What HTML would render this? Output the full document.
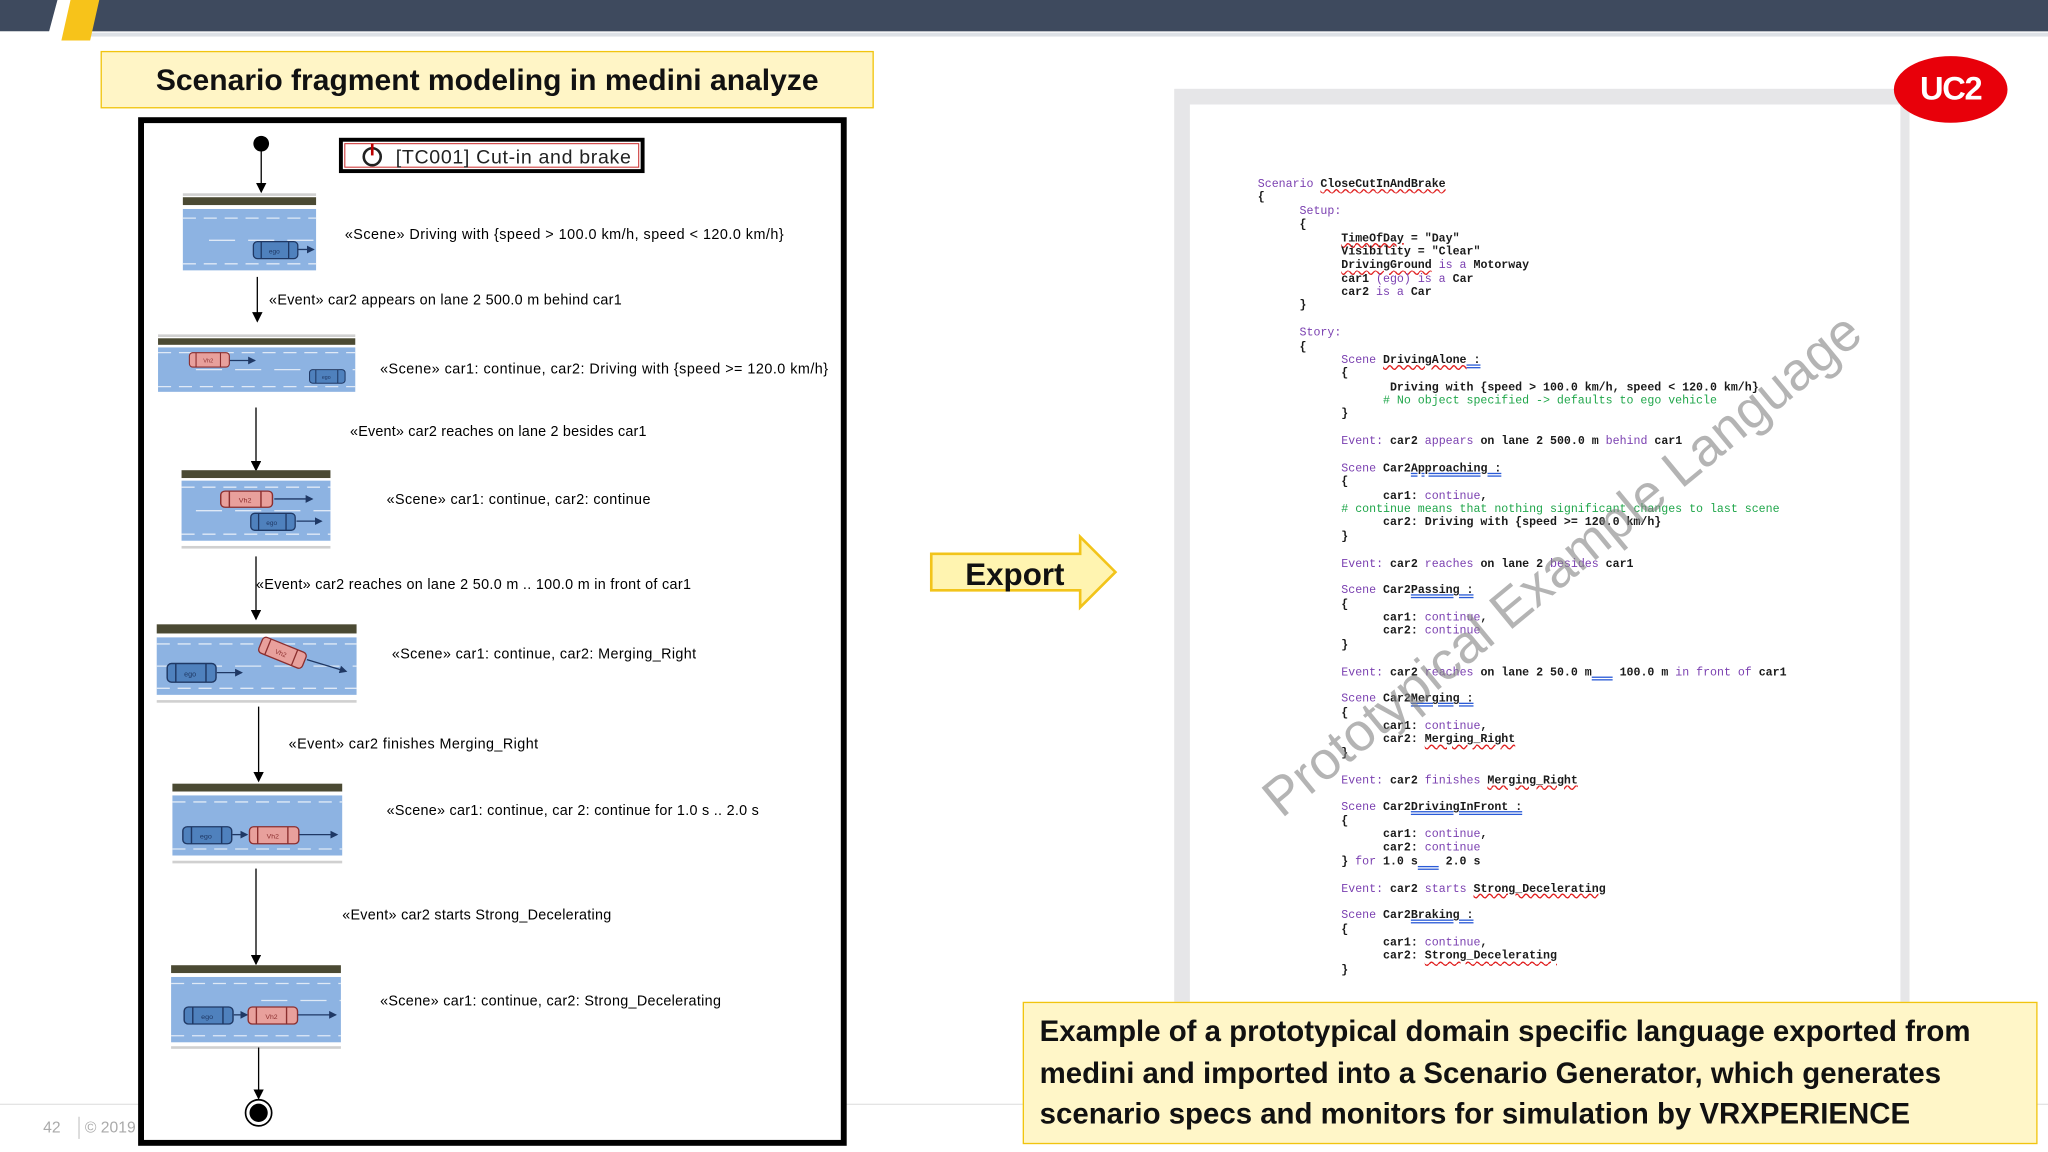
<!DOCTYPE html>
<html><head><meta charset="utf-8">
<style>
html,body{margin:0;padding:0;background:#fff;overflow:hidden;width:2048px;height:1152px}
#s{position:absolute;left:0;top:0;width:1568px;height:882px;transform:scale(1.306122);transform-origin:0 0;font-family:"Liberation Sans",sans-serif}
.abs{position:absolute}
pre{margin:0;font-family:"Liberation Mono",monospace;font-size:8.9px;line-height:10.38px;color:#1a1a1a;font-weight:bold;letter-spacing:0}
.k{color:#7a3fb0;font-weight:normal}
.g{color:#1fa64a;font-weight:normal}
.r{text-decoration:underline wavy #e02020;text-decoration-thickness:1px}
.b{text-decoration:underline double #2a5bd7}
</style></head><body>
<div id="s">
<!-- top bar -->
<svg class="abs" style="left:0;top:0" width="1568" height="40">
<rect x="0" y="0" width="1568" height="24" fill="#3e4a5e"/>
<rect x="0" y="25" width="1568" height="3" fill="#dde1e6"/>
<polygon points="44,0 58,0 50,30 36,30" fill="#fff"/>
<polygon points="0,24 48,24 46,30 0,30" fill="#fff"/>
<polygon points="54,0 76,0 69,31 47,31" fill="#f7c31a"/>
</svg>
<!-- title -->
<div class="abs" style="left:77px;top:39px;width:590px;height:42px;background:#fff5c6;border:1px solid #f1c40f;text-align:center;font-weight:bold;font-size:23px;line-height:42px;color:#111">Scenario fragment modeling in medini analyze</div>

<!-- footer -->
<div class="abs" style="left:0;top:845px;width:1568px;height:1px;background:#e3e3e3"></div>
<div class="abs" style="left:33px;top:856px;font-size:12px;color:#aaa">42</div>
<div class="abs" style="left:60px;top:855px;width:1px;height:17px;background:#ccc"></div>
<div class="abs" style="left:65px;top:856px;font-size:12px;color:#aaa">© 2019</div>

<!-- diagram -->
<svg class="abs" style="left:0;top:0" width="700" height="882" font-family="Liberation Sans, sans-serif" font-size="11">
<defs>
<marker id="ah" markerWidth="8" markerHeight="8" refX="7" refY="4" orient="auto" markerUnits="userSpaceOnUse"><path d="M0,0 L8,4 L0,8 z" fill="#000"/></marker>
<marker id="sa" markerWidth="6" markerHeight="6" refX="5" refY="3" orient="auto" markerUnits="userSpaceOnUse"><path d="M0,0 L6,3 L0,6 z" fill="#1f3864"/></marker>
<g id="ego"><rect x="0" y="0" width="34" height="13" rx="3" fill="#4f81bd" stroke="#1f3864" stroke-width="1"/><line x1="6" y1="0" x2="6" y2="13" stroke="#1f3864"/><line x1="27" y1="0" x2="27" y2="13" stroke="#1f3864"/><text x="16" y="9" font-size="5" text-anchor="middle" fill="#1f3864">ego</text></g>
<g id="vh"><rect x="0" y="0" width="36" height="13" rx="3" fill="#e8a09c" stroke="#8b2e2e" stroke-width="1"/><line x1="6" y1="0" x2="6" y2="13" stroke="#8b2e2e"/><line x1="28" y1="0" x2="28" y2="13" stroke="#8b2e2e"/><text x="17" y="9" font-size="5" text-anchor="middle" fill="#8b2e2e">Vh2</text></g>
</defs>
<rect x="108" y="92" width="538" height="783" fill="#fff" stroke="#000" stroke-width="4.5"/>
<circle cx="200" cy="110" r="6" fill="#000"/>
<line x1="200" y1="114" x2="200" y2="147" stroke="#000" marker-end="url(#ah)"/>
<rect x="261" y="107" width="231" height="24" fill="#fff" stroke="#000" stroke-width="3"/>
<rect x="264" y="110" width="225" height="18" fill="none" stroke="#c33" stroke-width="0.8"/>
<circle cx="285" cy="120" r="6.5" fill="none" stroke="#222" stroke-width="2"/>
<line x1="285" y1="110" x2="285" y2="119" stroke="#b00" stroke-width="2"/>
<text x="303" y="125" font-size="15" fill="#222" textLength="180">[TC001] Cut-in and brake</text>

<!-- scene1 -->
<rect x="140" y="148" width="102" height="2" fill="#d0d0d0"/>
<rect x="140" y="151" width="102" height="6" fill="#4b4a33"/>
<rect x="140" y="160" width="102" height="47" fill="#8db3e2"/>
<line x1="140" y1="167" x2="242" y2="167" stroke="#dfe9f6" stroke-dasharray="10,6"/>
<line x1="160" y1="184" x2="242" y2="184" stroke="#dfe9f6" stroke-dasharray="20,10"/>
<line x1="140" y1="202" x2="242" y2="202" stroke="#dfe9f6" stroke-dasharray="10,6"/>
<use href="#ego" x="194" y="185"/><line x1="228" y1="191" x2="240" y2="191" stroke="#1f3864" marker-end="url(#sa)"/>
<text x="264" y="183" textLength="336">«Scene» Driving with {speed &gt; 100.0 km/h, speed &lt; 120.0 km/h}</text>
<line x1="197" y1="212" x2="197" y2="246" stroke="#000" marker-end="url(#ah)"/>
<text x="206" y="233" textLength="270">«Event» car2 appears on lane 2 500.0 m behind car1</text>

<!-- scene2 -->
<rect x="121" y="256" width="151" height="2" fill="#d0d0d0"/>
<rect x="121" y="259" width="151" height="5" fill="#4b4a33"/>
<rect x="121" y="266" width="151" height="34" fill="#8db3e2"/>
<line x1="121" y1="270" x2="272" y2="270" stroke="#dfe9f6" stroke-dasharray="10,6"/>
<line x1="150" y1="283" x2="272" y2="283" stroke="#dfe9f6" stroke-dasharray="20,10"/>
<line x1="121" y1="296" x2="272" y2="296" stroke="#dfe9f6" stroke-dasharray="10,6"/>
<g transform="translate(145,270) scale(0.85)"><use href="#vh"/></g><line x1="176" y1="276" x2="195" y2="276" stroke="#1f3864" marker-end="url(#sa)"/>
<g transform="translate(237,283) scale(0.8)"><use href="#ego"/></g>
<text x="291" y="286" textLength="343">«Scene» car1: continue, car2: Driving with {speed &gt;= 120.0 km/h}</text>
<line x1="196" y1="312" x2="196" y2="360" stroke="#000" marker-end="url(#ah)"/>
<text x="268" y="334" textLength="227">«Event» car2 reaches on lane 2 besides car1</text>

<!-- scene3 -->
<rect x="139" y="360" width="114" height="6" fill="#4b4a33"/>
<rect x="139" y="368" width="114" height="46" fill="#8db3e2"/>
<line x1="139" y1="373" x2="253" y2="373" stroke="#dfe9f6" stroke-dasharray="10,6"/>
<line x1="150" y1="391" x2="253" y2="391" stroke="#dfe9f6" stroke-dasharray="20,10"/>
<line x1="139" y1="409" x2="253" y2="409" stroke="#dfe9f6" stroke-dasharray="10,6"/>
<rect x="139" y="418" width="114" height="2" fill="#d0d0d0"/>
<g transform="translate(169,376) scale(1.1,0.95)"><use href="#vh"/></g><line x1="210" y1="382" x2="239" y2="382" stroke="#1f3864" marker-end="url(#sa)"/>
<use href="#ego" x="192" y="393"/><line x1="227" y1="399" x2="246" y2="399" stroke="#1f3864" marker-end="url(#sa)"/>
<text x="296" y="386" textLength="202">«Scene» car1: continue, car2: continue</text>
<line x1="196" y1="426" x2="196" y2="474" stroke="#000" marker-end="url(#ah)"/>
<text x="196" y="451" textLength="333">«Event» car2 reaches on lane 2 50.0 m .. 100.0 m in front of car1</text>

<!-- scene4 -->
<rect x="120" y="478" width="153" height="7" fill="#4b4a33"/>
<rect x="120" y="488" width="153" height="44" fill="#8db3e2"/>
<line x1="120" y1="493" x2="273" y2="493" stroke="#dfe9f6" stroke-dasharray="10,6"/>
<line x1="120" y1="510" x2="273" y2="510" stroke="#dfe9f6" stroke-dasharray="20,10"/>
<line x1="120" y1="527" x2="273" y2="527" stroke="#dfe9f6" stroke-dasharray="10,6"/>
<rect x="120" y="536" width="153" height="2" fill="#d0d0d0"/>
<g transform="translate(128,508) scale(1.1)"><use href="#ego"/></g><line x1="166" y1="515" x2="185" y2="515" stroke="#1f3864" marker-end="url(#sa)"/>
<g transform="translate(202,487) rotate(22)"><use href="#vh"/></g><line x1="235" y1="505" x2="265" y2="514" stroke="#1f3864" marker-end="url(#sa)"/>
<text x="300" y="504" textLength="233">«Scene» car1: continue, car2: Merging_Right</text>
<line x1="198" y1="541" x2="198" y2="598" stroke="#000" marker-end="url(#ah)"/>
<text x="221" y="573" textLength="191">«Event» car2 finishes Merging_Right</text>

<!-- scene5 -->
<rect x="132" y="600" width="130" height="6" fill="#4b4a33"/>
<rect x="132" y="609" width="130" height="46" fill="#8db3e2"/>
<line x1="132" y1="614" x2="262" y2="614" stroke="#dfe9f6" stroke-dasharray="10,6"/>
<line x1="132" y1="650" x2="262" y2="650" stroke="#dfe9f6" stroke-dasharray="10,6"/>
<rect x="132" y="659" width="130" height="2" fill="#d0d0d0"/>
<g transform="translate(140,633) scale(1.1,1)"><use href="#ego"/></g><line x1="178" y1="639" x2="189" y2="639" stroke="#1f3864" marker-end="url(#sa)"/>
<g transform="translate(191,633) scale(1.05,1)"><use href="#vh"/></g><line x1="229" y1="639" x2="258" y2="639" stroke="#1f3864" marker-end="url(#sa)"/>
<text x="296" y="624" textLength="285">«Scene» car1: continue, car 2: continue for 1.0 s .. 2.0 s</text>
<line x1="196" y1="665" x2="196" y2="738" stroke="#000" marker-end="url(#ah)"/>
<text x="262" y="704" textLength="206">«Event» car2 starts Strong_Decelerating</text>

<!-- scene6 -->
<rect x="131" y="739" width="130" height="6" fill="#4b4a33"/>
<rect x="131" y="748" width="130" height="50" fill="#8db3e2"/>
<line x1="131" y1="753" x2="261" y2="753" stroke="#dfe9f6" stroke-dasharray="10,6"/>
<line x1="200" y1="766" x2="261" y2="766" stroke="#dfe9f6" stroke-dasharray="20,10"/>
<line x1="131" y1="793" x2="261" y2="793" stroke="#dfe9f6" stroke-dasharray="10,6"/>
<rect x="131" y="801" width="130" height="2" fill="#d0d0d0"/>
<g transform="translate(141,771) scale(1.1,1)"><use href="#ego"/></g><line x1="179" y1="777" x2="189" y2="777" stroke="#1f3864" marker-end="url(#sa)"/>
<g transform="translate(190,771) scale(1.05,1)"><use href="#vh"/></g><line x1="228" y1="777" x2="257" y2="777" stroke="#1f3864" marker-end="url(#sa)"/>
<text x="291" y="770" textLength="261">«Scene» car1: continue, car2: Strong_Decelerating</text>
<line x1="198" y1="802" x2="198" y2="841" stroke="#000" marker-end="url(#ah)"/>
<circle cx="198" cy="852" r="10" fill="#fff" stroke="#000" stroke-width="1.3"/>
<circle cx="198" cy="852" r="7" fill="#000"/>
</svg>

<!-- export arrow -->
<svg class="abs" style="left:705px;top:405px" width="160" height="66">
<polygon points="8,19 122,19 122,6 149,33 122,60 122,47 8,47" fill="#fff4b0" stroke="#f2c41a" stroke-width="2"/>
<text x="72" y="43" text-anchor="middle" font-family="Liberation Sans, sans-serif" font-weight="bold" font-size="24" fill="#111">Export</text>
</svg>

<!-- document -->
<div class="abs" style="left:899px;top:68px;width:563px;height:702px;background:#e6e6e8"></div>
<div class="abs" style="left:911px;top:80px;width:544px;height:690px;background:#fff"></div>
<pre class="abs" style="left:963px;top:136px"><span class="k">Scenario</span> <span class="r">CloseCutInAndBrake</span>
{
      <span class="k">Setup:</span>
      {
            <span class="r">TimeOfDay</span> = "Day"
            Visibility = "Clear"
            <span class="r">DrivingGround</span> <span class="k">is a</span> Motorway
            car1 <span class="k">(ego)</span> <span class="k">is a</span> Car
            car2 <span class="k">is a</span> Car
      }

      <span class="k">Story:</span>
      {
            <span class="k">Scene</span> <span class="r">DrivingAlone</span><span class="b"> :</span>
            {
                   Driving with {speed &gt; 100.0 km/h, speed &lt; 120.0 km/h}
                  <span class="g"># No object specified -&gt; defaults to ego vehicle</span>
            }

            <span class="k">Event:</span> car2 <span class="k">appears</span> on lane 2 500.0 m <span class="k">behind</span> car1

            <span class="k">Scene</span> Car2<span class="b">Approaching :</span>
            {
                  car1: <span class="k">continue</span>,
            <span class="g"># continue means that nothing significant changes to last scene</span>
                  car2: Driving with {speed &gt;= 120.0 km/h}
            }

            <span class="k">Event:</span> car2 <span class="k">reaches</span> on lane 2 <span class="k">besides</span> car1

            <span class="k">Scene</span> Car2<span class="b">Passing :</span>
            {
                  car1: <span class="k">continue</span>,
                  car2: <span class="k">continue</span>
            }

            <span class="k">Event:</span> car2 <span class="k">reaches</span> on lane 2 50.0 m<span class="b">   </span> 100.0 m <span class="k">in front of</span> car1

            <span class="k">Scene</span> Car2<span class="b">Merging :</span>
            {
                  car1: <span class="k">continue</span>,
                  car2: <span class="r">Merging_Right</span>
            }

            <span class="k">Event:</span> car2 <span class="k">finishes</span> <span class="r">Merging_Right</span>

            <span class="k">Scene</span> Car2<span class="b">DrivingInFront :</span>
            {
                  car1: <span class="k">continue</span>,
                  car2: <span class="k">continue</span>
            } <span class="k">for</span> 1.0 s<span class="b">   </span> 2.0 s

            <span class="k">Event:</span> car2 <span class="k">starts</span> <span class="r">Strong_Decelerating</span>

            <span class="k">Scene</span> Car2<span class="b">Braking :</span>
            {
                  car1: <span class="k">continue</span>,
                  car2: <span class="r">Strong_Decelerating</span>
            }</pre>
<div class="abs" style="left:1196px;top:433px;width:0;height:0">
<div style="position:absolute;left:-330px;top:-24px;width:660px;text-align:center;font-size:41px;color:rgba(130,130,130,0.6);transform:rotate(-39.5deg);white-space:nowrap">Prototypical Example Language</div>
</div>

<!-- UC2 -->
<div class="abs" style="left:1450px;top:43px;width:87px;height:51px;border-radius:50%;background:#e8000a;color:#fff;font-weight:bold;font-size:25px;line-height:51px;text-align:center;letter-spacing:-1px">UC2</div>

<!-- bottom box -->
<div class="abs" style="left:783px;top:767px;width:775px;height:107px;background:#fff6c8;border:1px solid #f1c40f"></div>
<div class="abs" style="left:796px;top:774px;font-weight:bold;font-size:22.5px;line-height:31.5px;color:#111;white-space:nowrap">Example of a prototypical domain specific language exported from<br>medini and imported into a Scenario Generator, which generates<br>scenario specs and monitors for simulation by VRXPERIENCE</div>
</div>
</body></html>
